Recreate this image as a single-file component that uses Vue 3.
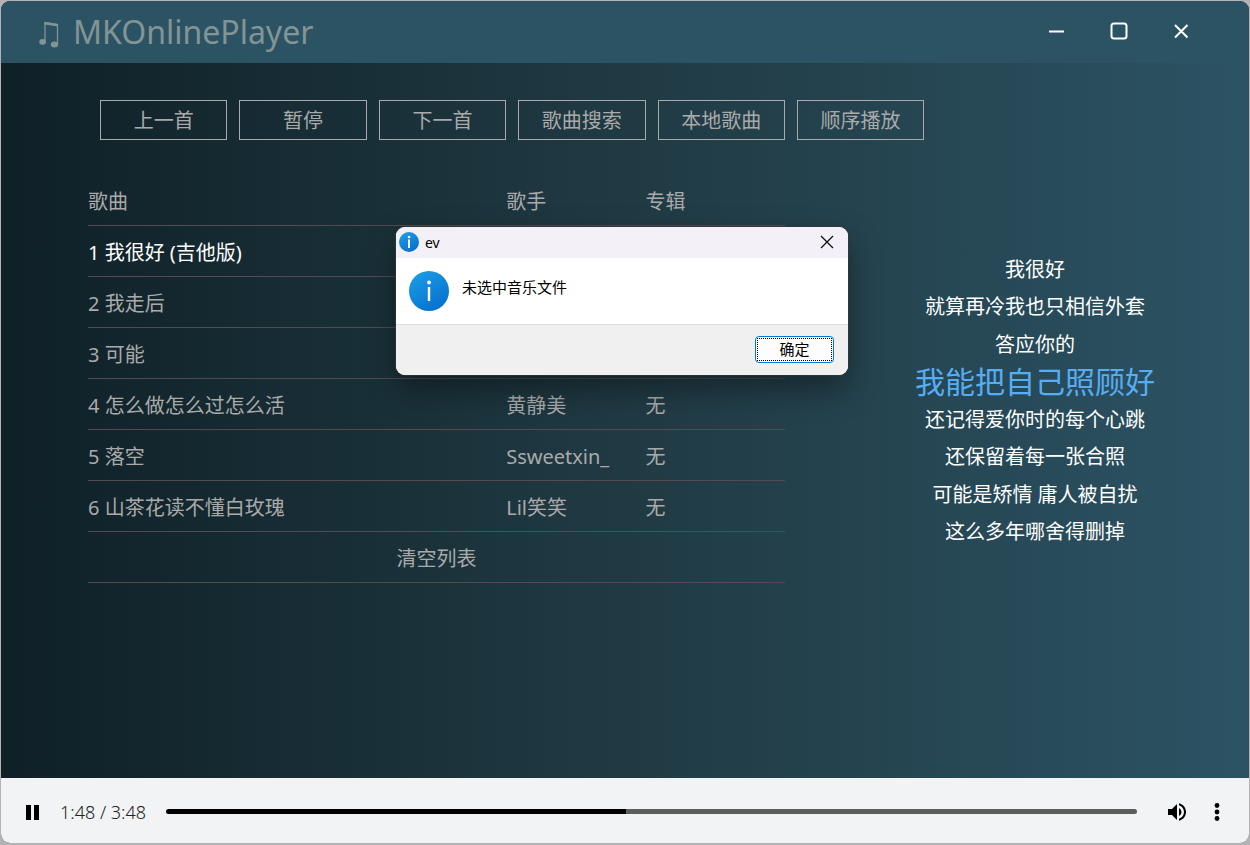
<script setup>
import { ref, computed } from 'vue'

const actions = ['上一首', '暂停', '下一首', '歌曲搜索', '本地歌曲', '顺序播放']

const songs = [
  { title: '我很好 (吉他版)', singer: '', album: '', playing: true },
  { title: '我走后', singer: '', album: '' },
  { title: '可能', singer: '', album: '' },
  { title: '怎么做怎么过怎么活', singer: '黄静美', album: '无' },
  { title: '落空', singer: 'Ssweetxin_', album: '无' },
  { title: '山茶花读不懂白玫瑰', singer: 'Lil笑笑', album: '无' }
]

const lyrics = [
  '我很好',
  '就算再冷我也只相信外套',
  '答应你的',
  '我能把自己照顾好',
  '还记得爱你时的每个心跳',
  '还保留着每一张合照',
  '可能是矫情 庸人被自扰',
  '这么多年哪舍得删掉'
]
const currentLine = 3

const duration = 228
const position = ref(108)
const clock = (s) => `${Math.floor(s / 60)}:${String(s % 60).padStart(2, '0')}`
const timeText = computed(() => `${clock(Number(position.value))} / ${clock(duration)}`)
const played = computed(() => `${(position.value / duration) * 100}%`)
</script>

<template>
  <div class="desktop">
    <div class="window">
      <header class="titlebar">
        <h1 class="brand">
          <svg class="note" viewBox="0 0 20 28" aria-hidden="true">
            <path d="M6 21.500V2.500L18.500 4.500V24" fill="none" stroke="currentColor" stroke-width="1.300" />
            <path d="M5.500 2l13.500 2v2.500l-13.500-2z" fill="currentColor" />
            <ellipse cx="3.600" cy="21.800" rx="3.400" ry="2.900" fill="currentColor" />
            <ellipse cx="15.500" cy="24.500" rx="3.700" ry="3" fill="currentColor" />
          </svg>
          <span>MKOnlinePlayer</span>
        </h1>
        <div class="window-buttons">
          <button type="button" aria-label="最小化">
            <svg viewBox="0 0 20 20"><path d="M2 10.500h15" /></svg>
          </button>
          <button type="button" aria-label="最大化">
            <svg viewBox="0 0 20 20"><rect x="2.500" y="2.500" width="15" height="15" rx="2.500" /></svg>
          </button>
          <button type="button" aria-label="关闭">
            <svg viewBox="0 0 20 20"><path d="M4 4l12.500 12.500M16.500 4L4 16.500" /></svg>
          </button>
        </div>
      </header>

      <main class="content">
        <nav class="toolbar">
          <button v-for="a in actions" :key="a" type="button">{{ a }}</button>
        </nav>

        <div class="columns">
          <table class="playlist">
            <thead>
              <tr>
                <th class="col-song">歌曲</th>
                <th class="col-small">歌手</th>
                <th class="col-small">专辑</th>
              </tr>
            </thead>
            <tbody>
              <tr v-for="(s, i) in songs" :key="s.title" :class="{ playing: s.playing }">
                <td>{{ i + 1 }} {{ s.title }}</td>
                <td>{{ s.singer }}</td>
                <td>{{ s.album }}</td>
              </tr>
              <tr>
                <td colspan="3" class="clear-cell"><button type="button">清空列表</button></td>
              </tr>
            </tbody>
          </table>

          <div class="lyrics">
            <p v-for="(line, i) in lyrics" :key="i" :class="{ current: i === currentLine }">{{ line }}</p>
          </div>
        </div>
      </main>

      <footer class="player">
        <button type="button" class="icon pause" aria-label="暂停播放">
          <svg viewBox="0 0 24 24"><path d="M5 5h5v15H5zM13 5h5v15h-5z" /></svg>
        </button>
        <span class="time">{{ timeText }}</span>
        <input
          v-model="position"
          class="seek"
          type="range"
          min="0"
          :max="duration"
          aria-label="播放进度"
          :style="{ '--played': played }"
        />
        <button type="button" class="icon volume" aria-label="音量">
          <svg viewBox="0 0 24 24">
            <path d="M3 9v6h4l5 5V4L7 9H3zm13.500 3A4.500 4.500 0 0 0 14 7.970v8.050c1.480-.73 2.500-2.250 2.500-4.020zM14 3.230v2.060c2.890.86 5 3.540 5 6.710s-2.110 5.850-5 6.710v2.060c4.010-.91 7-4.490 7-8.770s-2.990-7.860-7-8.770z" />
          </svg>
        </button>
        <button type="button" class="icon more" aria-label="更多">
          <svg viewBox="0 0 24 24">
            <circle cx="12" cy="5.500" r="2.400" /><circle cx="12" cy="12" r="2.400" /><circle cx="12" cy="18.500" r="2.400" />
          </svg>
        </button>
      </footer>

      <section class="dialog" role="dialog" aria-labelledby="dialog-title">
        <div class="dialog-title">
          <svg class="info-small" viewBox="0 0 20 20" aria-hidden="true">
            <defs>
              <linearGradient id="info-blue" x1="0" y1="0" x2="0.6" y2="1">
                <stop offset="0" stop-color="#1fa0e6" />
                <stop offset="1" stop-color="#0673d0" />
              </linearGradient>
            </defs>
            <circle cx="10" cy="10" r="10" fill="url(#info-blue)" />
            <circle cx="10" cy="5" r="1.300" fill="#fff" />
            <path d="M10 7.500v8.500" stroke="#fff" stroke-width="2" />
          </svg>
          <span id="dialog-title">ev</span>
          <button type="button" class="dialog-close" aria-label="关闭对话框">
            <svg viewBox="0 0 14 14"><path d="M1 1l12 12M13 1L1 13" /></svg>
          </button>
        </div>
        <div class="dialog-body">
          <svg class="info-large" viewBox="0 0 40 40" aria-hidden="true">
            <circle cx="20" cy="20" r="20" fill="url(#info-blue)" />
            <circle cx="20" cy="11.500" r="1.900" fill="#fff" />
            <path d="M20 16v14" stroke="#fff" stroke-width="2.400" />
          </svg>
          <p>未选中音乐文件</p>
        </div>
        <div class="dialog-actions">
          <button type="button"><span>确定</span></button>
        </div>
      </section>
    </div>
  </div>
</template>

<style>
body {
  margin: 0;
}
</style>

<style scoped>
.desktop {
  box-sizing: border-box;
  min-height: 100vh;
  padding: 1px 1px 2px;
  display: flex;
  background: #b4b2b5;
  font-family: "Noto Sans", "Noto Sans CJK SC", sans-serif;
}
.window {
  position: relative;
  flex: 1;
  display: flex;
  flex-direction: column;
  overflow: hidden;
  border-radius: 9px;
  background: linear-gradient(to right, #0f2027, #203a43, #2c5364);
  color: #aaa;
  font-size: 20px;
}
button {
  margin: 0;
  padding: 0;
  border: 0;
  background: none;
  color: inherit;
  font: inherit;
}
svg {
  display: block;
}

.titlebar {
  box-sizing: border-box;
  display: flex;
  align-items: center;
  justify-content: space-between;
  height: 62px;
  padding: 0 58px 2px 38px;
  background: #2c5364;
}
.brand {
  display: flex;
  align-items: center;
  gap: 14px;
  margin: 0;
  color: #839496;
  font-size: 32px;
  font-weight: 400;
  line-height: 60px;
}
.brand span {
  padding-top: 2px;
}
.note {
  width: 20px;
  height: 28px;
  margin-top: 6px;
}
.window-buttons {
  display: flex;
  gap: 42px;
}
.window-buttons svg {
  width: 20px;
  height: 20px;
  fill: none;
  stroke: #fff;
  stroke-width: 2;
}

.content {
  flex: 1;
  padding: 37px 0 0 87px;
}
.toolbar {
  display: grid;
  grid-template-columns: repeat(6, 1fr);
  gap: 12px;
  width: 71%;
  margin-left: 12px;
}
.toolbar button {
  height: 40px;
  border: 1px solid #aaa;
  line-height: 40px;
}
.columns {
  display: grid;
  grid-template-columns: 697fr 428fr;
  align-items: start;
  gap: 36px;
  margin-top: 35px;
}
.playlist {
  width: 100%;
  table-layout: fixed;
  border-collapse: separate;
  border-spacing: 0;
}
.playlist th,
.playlist td {
  box-sizing: border-box;
  height: 51px;
  padding: 3px 0 0;
  border-bottom: 1px solid #544a4f;
  font-weight: 400;
  line-height: 30px;
  text-align: left;
  white-space: nowrap;
}
.col-song {
  width: 60%;
}
.col-small {
  width: 20%;
}
.playing td {
  color: #fff;
}
.playlist .clear-cell {
  text-align: center;
}

.lyrics {
  display: grid;
  grid-template-rows: repeat(8, 1fr);
  align-items: center;
  height: 300px;
  margin-top: 76px;
  color: #fff;
  text-align: center;
}
.lyrics p {
  margin: 0;
  line-height: 30px;
}
.lyrics .current {
  color: #57adf3;
  font-size: 30px;
}

.player {
  box-sizing: border-box;
  display: flex;
  align-items: center;
  height: 65px;
  padding: 2px 20px 0;
  background: #f1f3f4;
  color: #222;
}
.icon svg {
  width: 24px;
  height: 24px;
  fill: #000;
}
.time {
  margin: 0 20px 0 15px;
  font-size: 18px;
  font-weight: 300;
  white-space: nowrap;
}
.seek {
  flex: 1;
  min-width: 0;
  height: 5px;
  margin: 0;
  appearance: none;
  border-radius: 3px;
  background: linear-gradient(to right, #000 var(--played), #5c5d5d var(--played));
}
.seek::-webkit-slider-thumb {
  appearance: none;
  width: 0;
  height: 0;
}
.volume {
  margin: 0 16px 0 28px;
}

.dialog {
  position: absolute;
  top: 226px;
  left: 395px;
  width: 452px;
  overflow: hidden;
  border-radius: 9px;
  background: #fff;
  box-shadow: 0 0 1px 1px rgba(60, 60, 60, 0.6), 0 14px 32px rgba(0, 0, 0, 0.4);
  color: #000;
  font-size: 15px;
}
.dialog-title {
  box-sizing: border-box;
  display: flex;
  align-items: center;
  gap: 6px;
  height: 31px;
  padding: 0 14px 1px 3px;
  background: #f3f0f8;
  font-size: 14px;
}
.info-small {
  width: 20px;
  height: 20px;
}
.dialog-close {
  margin-left: auto;
}
.dialog-close svg {
  width: 14px;
  height: 14px;
  fill: none;
  stroke: #111;
  stroke-width: 1.3;
}
.dialog-body {
  display: flex;
  gap: 13px;
  height: 53px;
  padding: 13px 13px 0;
}
.dialog-body p {
  margin: 5px 0 0;
  line-height: 22px;
}
.info-large {
  width: 40px;
  height: 40px;
}
.dialog-actions {
  display: flex;
  justify-content: flex-end;
  padding: 11px 14px 12px;
  border-top: 1px solid #dfdfdf;
  background: #f0f0f0;
}
.dialog-actions button {
  width: 79px;
  height: 27px;
  padding: 1px;
  border: 1px solid #0078d4;
  border-radius: 4px;
  background: #fdfdfd;
}
.dialog-actions span {
  display: block;
  border: 1px dotted #000;
  line-height: 21px;
}
</style>
